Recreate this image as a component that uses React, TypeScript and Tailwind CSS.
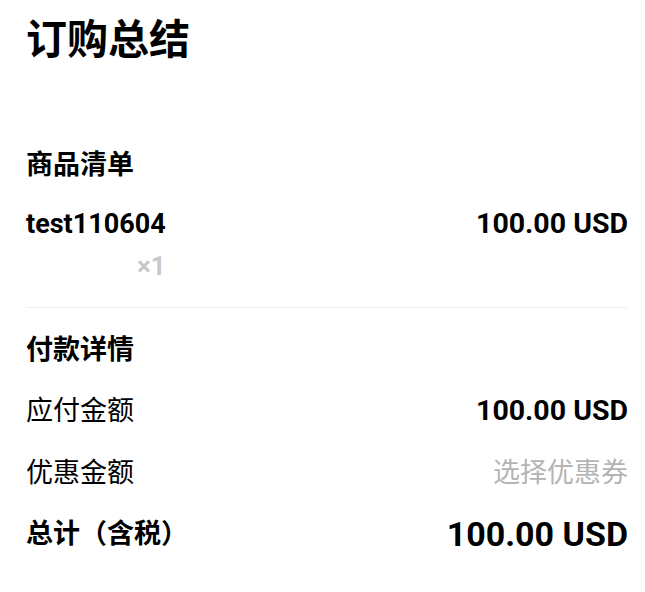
export default function App() {
  return (
    <div
      className="bg-white text-black pl-[26px] pr-[17px] pt-[14px]"
      style={{ fontFamily: 'Roboto, "Noto Sans CJK SC", sans-serif' }}
    >
      <h1 className="text-[41px] font-bold leading-[52px]">订购总结</h1>

      {/* Item list */}
      <div className="mt-[81px]">
        <h2 className="text-[27px] font-bold leading-[36px]">商品清单</h2>
        <div className="mt-[26px] flex justify-between items-start">
          <div className="flex flex-col items-end">
            <span className="text-[27px] font-bold leading-[30px]">test110604</span>
            <span className="text-[26px] font-bold text-[#c8c8c8] leading-[30px] mt-[12px]">×1</span>
          </div>
          <span className="text-[28.5px] font-bold leading-[30px]">100.00 USD</span>
        </div>
      </div>

      <div className="mt-[26px] border-t border-[#f0f0f0]" />

      {/* Payment details */}
      <div className="pt-[24px]">
        <h2 className="text-[27px] font-bold leading-[36px]">付款详情</h2>
        <div className="mt-[25px] flex justify-between items-center h-[36px]">
          <span className="text-[27px]">应付金额</span>
          <span className="text-[28.5px] font-bold">100.00 USD</span>
        </div>
        <div className="mt-[26px] flex justify-between items-center h-[36px]">
          <span className="text-[27px]">优惠金额</span>
          <span className="text-[27px] text-[#b4b4b4]">选择优惠券</span>
        </div>
        <div className="mt-[25px] flex justify-between items-center h-[36px]">
          <span className="text-[27px] font-bold">总计（含税）</span>
          <span className="text-[34px] font-bold">100.00 USD</span>
        </div>
      </div>
    </div>
  );
}
